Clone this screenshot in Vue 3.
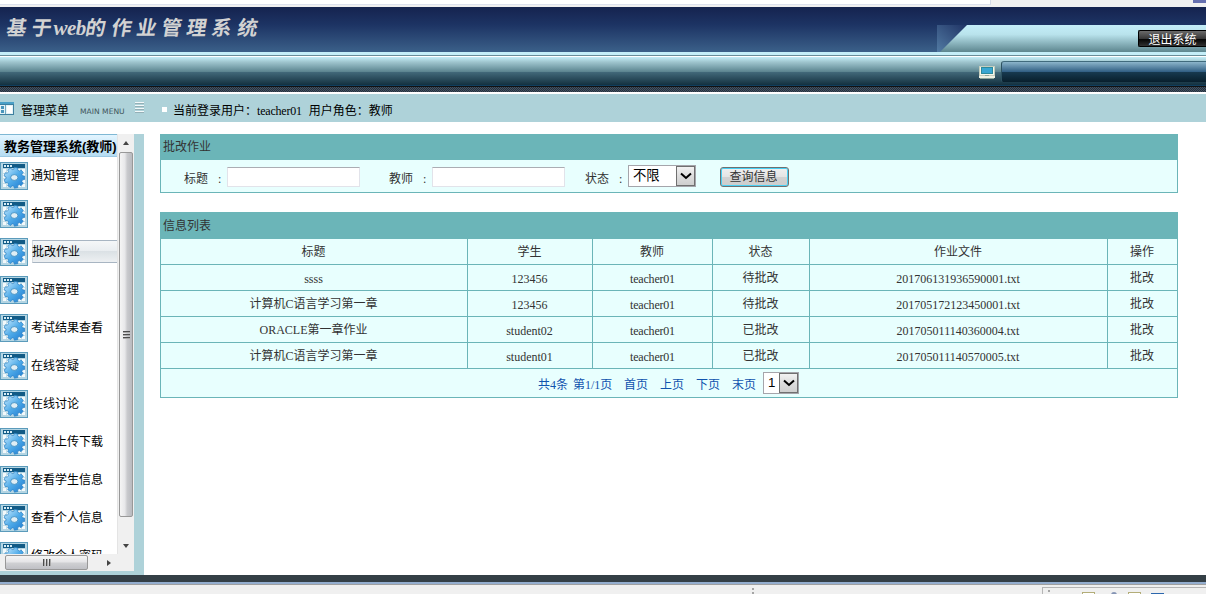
<template>
  <div class="page">
    <!-- ブラウザ上部 -->
    <div class="tab-strip">
      <div class="tab-white"></div>
      <div class="tab-mark"></div>
    </div>

    <!-- 头部 -->
    <header class="header">
      <h1>
        <span v-for="(t, i) in titleParts" :key="i" :class="{ latin: t === 'web' }">{{ t }}</span>
      </h1>
      <div class="header-right">
        <svg class="corner" width="32" height="27" viewBox="0 0 32 27">
          <defs>
            <linearGradient id="cornerBg" x1="0" y1="1" x2="1" y2="0">
              <stop offset="0" stop-color="#527ba3" />
              <stop offset="1" stop-color="#1e3163" />
            </linearGradient>
            <linearGradient id="cornerFg" gradientUnits="userSpaceOnUse" x1="0" y1="0" x2="0" y2="27">
              <stop offset="0" stop-color="#c4eef8" />
              <stop offset="0.35" stop-color="#b9e3ec" />
              <stop offset="1" stop-color="#5d868f" />
            </linearGradient>
          </defs>
          <rect width="32" height="27" fill="url(#cornerBg)" />
          <path d="M3 27 L30 0 H32 V27 Z" fill="url(#cornerFg)" />
        </svg>
        <div class="header-panel">
          <button class="logout">退出系统</button>
        </div>
      </div>
    </header>
    <div class="light-line"></div>
    <div class="nav-bar">
      <svg class="monitor" width="16" height="13" viewBox="0 0 16 13" shape-rendering="crispEdges">
        <rect x="0" y="0" width="16" height="10" fill="#c4cdbd" />
        <rect x="1" y="1" width="14" height="8" fill="#f4f6ea" />
        <rect x="2" y="1" width="12" height="7" fill="#2c8a9c" />
        <rect x="3" y="2" width="10" height="5" fill="#38a6d2" />
        <rect x="0" y="10" width="16" height="2" fill="#eef1e4" />
        <rect x="6" y="9" width="4" height="1" fill="#8da69b" />
        <rect x="1" y="12" width="14" height="1" fill="#8da69b" />
      </svg>
      <div class="nav-panel"></div>
    </div>
    <div class="pattern"></div>

    <!-- 登录信息 -->
    <div class="info-bar">
      <svg class="menu-icon" width="14" height="13" viewBox="0 0 14 13" shape-rendering="crispEdges">
        <rect width="14" height="13" fill="#3d7f9f" />
        <rect width="14" height="2" fill="#4aa0c8" />
        <rect x="0" y="3" width="13" height="9" fill="#e4f2f6" />
        <rect x="1" y="4" width="3" height="3" fill="#4a95bb" />
        <rect x="1" y="8" width="3" height="3" fill="#4a95bb" />
        <rect x="5" y="3" width="1" height="9" fill="#72a9c0" />
        <rect x="7" y="4" width="5" height="7" fill="#fff" />
      </svg>
      <span class="menu-title">管理菜单</span>
      <span class="main-menu">MAIN MENU</span>
      <span class="lines"><i v-for="n in 4" :key="n"></i></span>
      <span class="dot"></span>
      <span class="login-user">当前登录用户：<b>teacher01</b></span>
      <span class="login-role">用户角色：教师</span>
    </div>

    <div class="main">
      <!-- 左侧菜单 -->
      <aside class="sidebar">
        <div class="side-top">
          <div class="menu">
            <div class="menu-head">教务管理系统(教师)</div>
            <div v-for="item in menus" :key="item" class="menu-item" :class="{ active: item === current }">
              <svg width="28" height="28" viewBox="0 0 28 28">
                <defs>
                  <linearGradient id="gearFill" x1="0" y1="0" x2="1" y2="1">
                    <stop offset="0.1" stop-color="#b5e0fa" />
                    <stop offset="0.5" stop-color="#4fabe9" />
                    <stop offset="1" stop-color="#1c78cf" />
                  </linearGradient>
                </defs>
                <rect x="0.5" y="0.5" width="27" height="27" fill="#b4d5e3" stroke="#5b9bbb" />
                <rect x="3" y="2" width="22" height="4" fill="#125b86" />
                <path d="M4 3h2v2H4zM7 3h2v2H7zM10 3h2v2h-2z" fill="#d8edf5" />
                <rect x="3" y="7" width="22" height="18" fill="#f3f9fb" />
                <path d="M3 11.5h22M3 16.5h22M3 21.5h22M6.5 7v18M21.5 7v18" stroke="#c6dfe8" />
                <path :d="gearPath" fill="url(#gearFill)" stroke="#287fc2" stroke-width="0.7" stroke-linejoin="round" />
                <ellipse cx="14.3" cy="15.5" rx="3.6" ry="2.9" fill="#dfeef5" stroke="#3586bd" stroke-width="0.8" />
              </svg>
              <span>{{ item }}</span>
            </div>
          </div>
          <div class="vscroll">
            <div class="arrow"><i class="arrow-up"></i></div>
            <div class="vthumb"><i></i><i></i><i></i></div>
            <div class="arrow bottom"><i class="arrow-down"></i></div>
          </div>
        </div>
        <div class="hscroll">
          <div class="hthumb"><i></i><i></i><i></i></div>
          <i class="arrow-right"></i>
        </div>
      </aside>
      <div class="divider"></div>

      <!-- 内容 -->
      <section class="content">
        <div class="search-box">
          <div class="box-title">批改作业</div>
          <div class="search-row">
            <label class="l1">标题<em>:</em></label>
            <input v-model="query.title" type="text" />
            <label class="l2">教师<em>:</em></label>
            <input v-model="query.teacher" type="text" />
            <label class="l3">状态<em>:</em></label>
            <div class="select status">
              <span>不限</span>
              <div class="drop"><svg width="12" height="8" viewBox="0 0 12 8"><path d="M1 1.5 L6 6 L11 1.5" /></svg></div>
            </div>
            <button class="query">查询信息</button>
          </div>
        </div>

        <table>
          <colgroup>
            <col v-for="n in 6" :key="n" :class="'c' + n" />
          </colgroup>
          <tbody>
            <tr class="box-title"><td colspan="6">信息列表</td></tr>
            <tr><td v-for="h in heads" :key="h">{{ h }}</td></tr>
            <tr v-for="row in rows" :key="row[4]">
              <td v-for="(cell, i) in row" :key="i" :class="{ en: /^[\w.]+$/.test(cell), teacher: i === 2 }">{{ cell }}</td>
            </tr>
            <tr class="pager-row">
              <td colspan="6">
                <div class="pager">
                  <span class="total">共4条</span>
                  <span class="pages">第1/1页</span>
                  <a v-for="p in pagers" :key="p">{{ p }}</a>
                  <div class="select page-select">
                    <span>1</span>
                    <div class="drop"><svg width="12" height="8" viewBox="0 0 12 8"><path d="M1 1.5 L6 6 L11 1.5" /></svg></div>
                  </div>
                </div>
              </td>
            </tr>
          </tbody>
        </table>
      </section>
    </div>

    <!-- 底部 -->
    <div class="footer-dark"></div>
    <div class="footer-blue"></div>
    <div class="status-bar">
      <div class="grip"><i></i><i></i></div>
      <div class="tray">
        <i class="tgrip"></i>
        <i class="t1"></i><i class="t2"></i><i class="t3"></i><i class="t4"></i>
      </div>
    </div>
  </div>
</template>

<script setup>
import { ref } from 'vue'

const titleParts = ['基', '于', 'web', '的', '作', '业', '管', '理', '系', '统']

const menus = [
  '通知管理',
  '布置作业',
  '批改作业',
  '试题管理',
  '考试结果查看',
  '在线答疑',
  '在线讨论',
  '资料上传下载',
  '查看学生信息',
  '查看个人信息',
  '修改个人密码'
]
const current = ref('批改作业')

const query = ref({
  title: '',
  teacher: ''
})

const heads = ['标题', '学生', '教师', '状态', '作业文件', '操作']
const rows = [
  ['ssss', '123456', 'teacher01', '待批改', '201706131936590001.txt', '批改'],
  ['计算机C语言学习第一章', '123456', 'teacher01', '待批改', '201705172123450001.txt', '批改'],
  ['ORACLE第一章作业', 'student02', 'teacher01', '已批改', '201705011140360004.txt', '批改'],
  ['计算机C语言学习第一章', 'student01', 'teacher01', '已批改', '201705011140570005.txt', '批改']
]
const pagers = ['首页', '上页', '下页', '末页']

// 齿轮轮廓
const makeGear = (cx, cy, outer, inner, teeth) => {
  const pts = []
  const step = (Math.PI * 2) / teeth
  for (let i = 0; i < teeth; i++) {
    const a = i * step
    const list = [[-0.34, inner], [-0.24, outer], [0.24, outer], [0.34, inner]]
    list.forEach(([k, r]) => {
      pts.push(`${(cx + r * Math.cos(a + k * step)).toFixed(1)} ${(cy + r * Math.sin(a + k * step)).toFixed(1)}`)
    })
  }
  return 'M' + pts.join('L') + 'Z'
}
const gearPath = makeGear(14.3, 15.8, 10.4, 8.4, 9)
</script>

<style>
html,
body {
  overflow: hidden;
}
</style>

<style scoped>
* {
  box-sizing: border-box;
}

.page {
  width: 1206px;
  height: 594px;
  overflow: hidden;
  background: #fff;
  color: #000;
  font-family: "Liberation Serif", "Noto Sans CJK SC", serif;
  font-size: 12px;
}

i,
em {
  font-style: normal;
}

.tab-strip {
  display: flex;
  justify-content: space-between;
  height: 7px;
  background: #f0f0f0;
}

.tab-white {
  width: 991px;
  height: 5px;
  background: #fff;
  border-right: 1px solid #d5dae6;
  border-bottom: 1px solid #dde2ee;
}

.tab-mark {
  width: 13px;
  height: 3px;
  background: #6670b0;
}

/* 头部 */
.header {
  display: flex;
  justify-content: space-between;
  height: 45px;
  background: linear-gradient(#15234f, #1d3464 40%, #3b6089);
}

h1 {
  display: flex;
  margin: 5px 0 0 6px;
  color: #d2d2d2;
  font-size: 20px;
  font-weight: bold;
  line-height: 32px;
}

h1 span {
  width: 25.2px;
  transform: skewX(-10deg);
}

h1 .latin {
  width: 32px;
  margin-left: -3px;
  font-size: 21px;
  font-style: italic;
  letter-spacing: -0.5px;
  transform: none;
}

.header-right {
  display: flex;
  margin-top: 18px;
}

.header-panel {
  display: flex;
  width: 237px;
  height: 27px;
  justify-content: flex-end;
  background: linear-gradient(#c4eef8, #b9e3ec 35%, #5d868f);
}

.logout {
  width: 68px;
  height: 17px;
  margin-top: 5px;
  padding: 0;
  border: 1px solid #000;
  border-right: none;
  border-radius: 2px 0 0 2px;
  background: linear-gradient(#6a6a6a, #383838 50%, #000 50%, #303030);
  color: #fff;
  font-family: "Noto Sans CJK SC", sans-serif;
  font-size: 12px;
  line-height: 13px;
}

.light-line {
  height: 5px;
  border-bottom: 1px solid #fff;
  background: linear-gradient(#c4eef8 0 3px, #6a8d98 3px);
}

.nav-bar {
  display: flex;
  height: 30px;
  justify-content: flex-end;
  border-bottom: 1px solid #111;
  background: linear-gradient(#c4eef8, #9fc5ce 5px, #5a838e 15px, #42697a 15px, #14313f 28px, #0f3e5e 28px);
}

.monitor {
  margin: 9px 6px 0 0;
}

.nav-panel {
  width: 205px;
  height: 21px;
  margin-top: 4px;
  border-top: 1px solid #416b7d;
  border-left: 1px solid #2d5261;
  border-radius: 3px 0 0 2px;
  background: linear-gradient(#8cb5cb, #2f5d82 10px, #173a50 10px, #081f2c);
}

.pattern {
  height: 5px;
  background: repeating-conic-gradient(#24303d 0 25%, #445260 0 50%) 0 0 / 2px 2px;
}

/* 登录信息栏 */
.info-bar {
  display: flex;
  height: 30px;
  border-top: 2px solid #fff;
  background: #aed2d9;
  font-family: "Noto Sans CJK SC", sans-serif;
  line-height: 31px;
  white-space: nowrap;
}

.menu-icon {
  margin-top: 8px;
}

.menu-title {
  width: 59px;
  padding-left: 7px;
}

.main-menu {
  width: 62px;
  padding-left: 7px;
  color: #3f565c;
  font-family: "DejaVu Sans", sans-serif;
  font-size: 7.6px;
  line-height: 35px;
}

.lines {
  display: flex;
  flex-direction: column;
  gap: 2px;
  width: 9px;
  margin-top: 8px;
}

.lines i {
  height: 1px;
  background: #f2f8f9;
  box-shadow: 0 1px #94afb6;
}

.dot {
  width: 5px;
  height: 5px;
  margin: 13px 0 0 18px;
  background: #fff;
}

.login-user {
  margin-left: 6px;
}

.login-user b {
  font-family: "Liberation Serif", serif;
  font-weight: normal;
  letter-spacing: -0.2px;
}

.login-role {
  margin-left: 7px;
}

/* 主体 */
.main {
  display: flex;
  height: 453px;
  padding-top: 12px;
}

.sidebar {
  width: 134px;
  border-bottom: 4px solid #aed2d9;
  background: #f0f0f0;
}

.side-top {
  display: flex;
  height: 420px;
}

.menu {
  width: 117px;
  overflow: hidden;
  background: #fff;
  font-family: "Noto Sans CJK SC", sans-serif;
}

.menu-head {
  height: 23px;
  padding-left: 4px;
  border-top: 1px solid #7fb8d4;
  border-bottom: 1px solid #9cc9e4;
  background: linear-gradient(#e3f5ff, #b5dcf2);
  font-family: "Liberation Sans", "Noto Sans CJK SC", sans-serif;
  font-size: 13px;
  font-weight: bold;
  line-height: 23px;
  white-space: nowrap;
}

.menu-item {
  display: flex;
  height: 38px;
  padding-top: 5px;
}

.menu-item svg {
  flex: none;
}

.menu-item span {
  flex: 1;
  height: 23px;
  margin: 2px 0 0 3px;
  line-height: 21px;
  white-space: nowrap;
}

.menu-item.active span {
  margin-left: 4px;
  border: 1px solid #a8b5c2;
  border-right: none;
  border-left-color: #d5dbe0;
  background: linear-gradient(#f5f7f8, #e9edf0 48%, #dbe1e5 50%, #edf0f2);
  line-height: 19px;
  text-indent: -1px;
}

.vscroll {
  display: flex;
  flex-direction: column;
  width: 17px;
  padding: 0 1px;
  border-left: 1px solid #e4e4e4;
  background: #f0f0f0;
}

.arrow {
  display: flex;
  height: 18px;
  align-items: center;
  justify-content: center;
}

.bottom {
  margin-top: 20px;
  height: 17px;
}

.arrow-up,
.arrow-down {
  border: 3px solid transparent;
}

.arrow-up {
  margin-top: -3px;
  border-bottom: 4px solid #444;
}

.arrow-down {
  margin-top: 3px;
  border-top: 4px solid #444;
}

.vthumb {
  display: flex;
  flex-direction: column;
  gap: 2px;
  align-items: center;
  justify-content: center;
  height: 365px;
  border: 1px solid #989898;
  border-radius: 2px;
  background: linear-gradient(90deg, #f5f5f5, #e8e8ea 40%, #c9cacd 60%, #b9babf);
}

.vthumb i {
  width: 7px;
  height: 1px;
  background: #4d4d4d;
  box-shadow: 0 1px #aaa;
}

.hscroll {
  display: flex;
  width: 117px;
  height: 17px;
  align-items: center;
  background: #f0f0f0;
}

.hthumb {
  display: flex;
  gap: 2px;
  align-items: center;
  justify-content: center;
  width: 83px;
  height: 15px;
  margin-left: 5px;
  border: 1px solid #989898;
  border-radius: 2px;
  background: linear-gradient(#f5f5f5, #e5e5e7 45%, #cfd0d3 55%, #bfc0c5);
}

.hthumb i {
  width: 1px;
  height: 7px;
  background: #4d4d4d;
  box-shadow: 1px 0 #aaa;
}

.arrow-right {
  margin-left: 19px;
  border: 3px solid transparent;
  border-left: 4px solid #444;
}

.divider {
  width: 10px;
  background: #aed2d9;
}

.content {
  width: 1018px;
  margin-left: 16px;
  color: #333;
}

/* 查询条件 */
.search-box {
  height: 59px;
  margin-bottom: 19px;
  border: 1px solid #6bb5b8;
  background: #e8fffe;
}

.search-box .box-title {
  height: 25px;
  padding-left: 2px;
  background: #6bb5b8;
  line-height: 24px;
}

.search-row {
  display: flex;
  height: 32px;
}

.search-row label {
  display: flex;
  justify-content: space-between;
  padding-top: 10px;
  line-height: 19px;
}

.search-row em {
  width: 9px;
}

.l1 {
  width: 43px;
  margin-left: 23px;
}

.l2 {
  width: 43px;
  margin-left: 29px;
}

.l3 {
  width: 43px;
  margin-left: 20px;
}

.search-row input {
  width: 133px;
  height: 20px;
  margin-top: 7px;
  padding: 1px;
  border: 1px solid #e2e3ea;
  border-top-color: #abadb3;
  background: #fff;
}

.select {
  display: flex;
  height: 22px;
  border: 1px solid #a5a5ab;
  background: #fff;
  color: #000;
}

.select span {
  flex: 1;
  font-family: "Liberation Sans", "Noto Sans CJK SC", sans-serif;
  font-size: 13.3px;
  line-height: 20px;
}

.drop {
  display: flex;
  width: 19px;
  align-items: center;
  justify-content: center;
  border: 1px solid #707070;
  background: linear-gradient(#f2f2f2, #ddd 50%, #cfcfcf);
}

.drop path {
  fill: none;
  stroke: #000;
  stroke-width: 2;
}

.status {
  width: 68px;
  margin-top: 5px;
}

.status span {
  padding-left: 4px;
}

.query {
  width: 69px;
  height: 20px;
  margin: 7px 0 0 24px;
  padding: 0 2px 3px 0;
  border: 1px solid #707070;
  border-radius: 3px;
  background: linear-gradient(#f0f0f0, #e4e4e4 50%, #d2d2d2 50%, #cdcdcd);
  box-shadow: inset 0 0 0 1px #48d0f4;
  color: #333;
  font-family: "Noto Sans CJK SC", sans-serif;
  font-size: 12px;
  line-height: 15px;
}

/* 信息列表 */
table {
  width: 1018px;
  table-layout: fixed;
  border-collapse: collapse;
  background: #e8fffe;
  text-align: center;
}

.c1 { width: 307px; }
.c2 { width: 125px; }
.c3 { width: 120px; }
.c4 { width: 97px; }
.c5 { width: 298px; }
.c6 { width: 70px; }

tr {
  height: 26px;
}

td {
  height: 26px;
  padding: 0 1px 0 0;
  border: 1px solid #6bb5b8;
  line-height: 22px;
}

tr.box-title td {
  padding-left: 2px;
  background: #6bb5b8;
  text-align: left;
}

td.en {
  padding-top: 3px;
}

td.teacher {
  padding-right: 0;
  letter-spacing: -0.2px;
}

tr.pager-row,
.pager-row td {
  height: 29px;
}

.pager {
  display: flex;
  height: 28px;
  padding-left: 377px;
  color: #1053ae;
  line-height: 33px;
  text-align: left;
  white-space: nowrap;
}

.total {
  width: 35px;
}

.pages {
  width: 51px;
}

.pager a {
  width: 36px;
}

.page-select {
  width: 36px;
  margin: 3px 0 0 -5px;
}

.page-select span {
  padding-left: 4px;
}

/* 底部 */
.footer-dark {
  height: 7px;
  background: #343f46;
}

.footer-blue {
  height: 3px;
  border-bottom: 1px solid #a0a0a0;
  background: #94aecf;
}

.status-bar {
  display: flex;
  height: 9px;
  background: #f0f0f0;
}

.grip {
  display: flex;
  flex-direction: column;
  gap: 2px;
  margin: 3px 0 0 752px;
}

.grip i,
.tgrip {
  width: 2px;
  height: 2px;
  background: #a5a5a5;
}

.tray {
  display: flex;
  width: 164px;
  height: 7px;
  margin: 2px 0 0 288px;
  padding-top: 2px;
  border-top: 1px solid #b5b5b5;
  border-left: 1px solid #b5b5b5;
}

.tgrip {
  margin: 0 32px 0 5px;
}

.t1,
.t3 {
  width: 13px;
  height: 4px;
  margin-top: 2px;
  border: 1px solid #b3ad78;
  background: #fff;
}

.t2 {
  width: 6px;
  height: 4px;
  margin: 2px 11px 0 16px;
  border-radius: 3px 3px 0 0;
  background: #8594b4;
}

.t4 {
  width: 13px;
  height: 2px;
  margin: 3px 0 0 10px;
  background: #2c67ad;
}
</style>
